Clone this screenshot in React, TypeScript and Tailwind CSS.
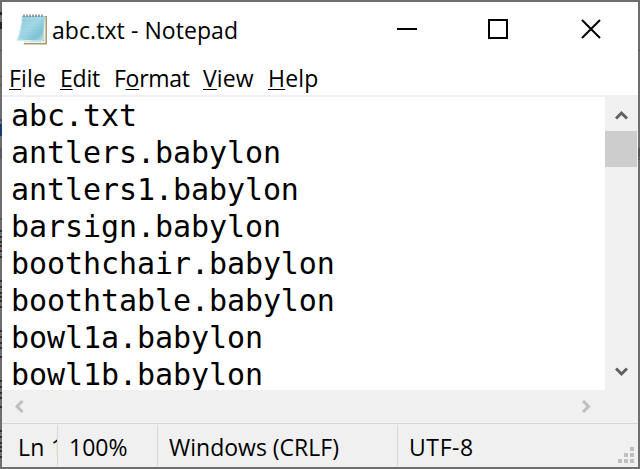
import React from 'react';

const files = ['abc.txt', 'antlers.babylon', 'antlers1.babylon', 'barsign.babylon', 'boothchair.babylon', 'boothtable.babylon', 'bowl1a.babylon', 'bowl1b.babylon'];

const edgeMarks: [number, number, string][] = [
  [12, 3, '#242424'], [22, 7, '#242424'], [50, 1, '#505050'], [76, 1, '#555'], [84, 2, '#665a52'],
  [119, 2, '#35517c'], [124, 12, '#163c78'], [148, 11, '#5c5c5c'], [218, 2, '#555'],
  [230, 2, '#303030'], [236, 2, '#303030'], [241, 2, '#303030'], [245, 2, '#303030'], [250, 2, '#303030'], [256, 2, '#303030'],
  [280, 2, '#303030'], [286, 2, '#303030'], [292, 2, '#303030'], [296, 2, '#303030'], [300, 2, '#303030'], [306, 2, '#303030'],
  [330, 2, '#303030'], [336, 2, '#303030'], [342, 2, '#303030'], [347, 2, '#303030'], [356, 2, '#303030'],
  [380, 2, '#303030'], [386, 2, '#303030'], [392, 2, '#303030'], [397, 2, '#303030'], [406, 2, '#303030'],
  [430, 2, '#303030'], [436, 2, '#303030'], [442, 2, '#303030'], [446, 2, '#303030'], [450, 2, '#303030'], [456, 2, '#303030'],
];

function NotepadIcon() {
  return (
    <svg className="h-8 w-8 shrink-0" viewBox="0 0 32 32">
      <defs>
        <linearGradient id="page" x1="0" y1="0" x2="1" y2="1">
          <stop offset="0" stopColor="#8fc9da" />
          <stop offset=".45" stopColor="#a6dae8" />
          <stop offset=".75" stopColor="#7fc4d5" />
          <stop offset="1" stopColor="#b9e5ee" />
        </linearGradient>
      </defs>
      <path d="M28 3h3v28.500H7.500l1-3 19-1z" fill="#a99b70" />
      <path d="M28 4h1.500v26H8v-2h20z" fill="#f0eee0" />
      <path d="M6 3h23l-2.500 24.500q-.2 1.300-1.700 1.300L.7 27.500Q5 18 6 3z" fill="url(#page)" />
      <path d="M6 4Q5 18 1 27l25 1.200" fill="none" stroke="#d5f1f7" strokeWidth="1" />
      <path d="M7 8h20M7 11h20M6 14h20M6 17h20M5 20h19M4 23h20" stroke="#74b4c7" strokeWidth=".6" opacity=".4" />
      <path d="M8 1.500v2.500M11 1.500v2.500M14 1.500v2.500M17 1.500v2.500M20 1.500v2.500M23 1.500v2.500M26 1.500v2.500" stroke="#777f83" strokeWidth="1.500" />
    </svg>
  );
}

function Chevron({ d, color, className }: { d: string; color: string; className: string }) {
  return (
    <svg className={`block shrink-0 ${className}`} fill="none" stroke={color} strokeWidth="3">
      <path d={d} />
    </svg>
  );
}

function MenuItem({ before = '', hot, after, className }: { before?: string; hot: string; after: string; className: string }) {
  return (
    <span className={`shrink-0 whitespace-nowrap ${className}`}>
      {before}<u className="decoration-1 underline-offset-2">{hot}</u>{after}
    </span>
  );
}

export default function App() {
  return (
    <div className="flex h-[469px] w-[640px] overflow-hidden bg-[#6e6e6e] pt-[2px] pb-[2px] font-['Open_Sans',sans-serif] text-[23px] text-black">
      <svg className="-mt-[2px] h-[469px] w-[2px] shrink-0" shapeRendering="crispEdges">
        {edgeMarks.map(([y, h, c]) => <rect key={y} x="0" y={y} width="2" height={h} fill={c} />)}
      </svg>
      <main className="flex h-[465px] w-[636px] shrink-0 flex-col bg-white">
        <header className="flex h-[57px] shrink-0 pl-[14px] pt-[11px]">
          <NotepadIcon />
          <h1 className="ml-[4px] w-[345px] whitespace-nowrap leading-[34px] tracking-[0.07px]">abc.txt - Notepad</h1>
          <svg className="h-8 w-[210px]" fill="none" stroke="black" strokeWidth="2">
            <path d="M0 16h20M92 7h18v18H92z" />
            <path d="M185 7l18 18M203 7l-18 18" />
          </svg>
        </header>
        <nav className="flex h-[36px] shrink-0 pl-[7px] leading-[38px]">
          <MenuItem hot="F" after="ile" className="w-[51px] tracking-[0.2px]" />
          <MenuItem hot="E" after="dit" className="w-[54px] tracking-[-0.2px]" />
          <MenuItem before="F" hot="o" after="rmat" className="w-[89px] tracking-[-0.3px]" />
          <MenuItem hot="V" after="iew" className="w-[65px] tracking-[0.1px]" />
          <MenuItem hot="H" after="elp" className="w-[55px] tracking-[0.2px]" />
        </nav>
        <div className="h-[2px] shrink-0 bg-[#f0f0f0]" />
        <div className="flex h-[293px] shrink-0">
          <div className="w-[603px] shrink-0 overflow-hidden pl-[9px] font-['DejaVu_Sans_Mono',monospace] text-[30px] leading-[37px] tracking-[-0.07px]">
            {files.map((f) => <div key={f} className="h-[37px] whitespace-nowrap">{f}</div>)}
          </div>
          <div className="flex w-[33px] shrink-0 flex-col bg-[#f0f0f0]">
            <div className="flex h-[34px] items-center justify-center pt-[2px]"><Chevron d="M1 8.500L6.500 3L12 8.500" color="#606060" className="h-[10px] w-[13px]" /></div>
            <div className="h-[36px] w-[32px] bg-[#cdcdcd]" />
            <div className="grow" />
            <div className="flex h-[34px] items-center justify-center pb-[2px]"><Chevron d="M1 1.500L6.500 7L12 1.500" color="#606060" className="h-[10px] w-[13px]" /></div>
          </div>
        </div>
        <div className="flex h-[33px] shrink-0 items-center justify-between bg-[#f0f0f0] pl-[12px] pr-[47px]">
          <Chevron d="M8.500 1L3 6.500L8.500 12" color="#bfbfbf" className="h-[13px] w-[10px]" />
          <Chevron d="M2 1L7.500 6.500L2 12" color="#bfbfbf" className="h-[13px] w-[10px]" />
        </div>
        <footer className="flex h-[44px] shrink-0 border-t border-[#d7d7d7] bg-[#f0f0f0] pt-px leading-[45px]">
          <div className="h-[41px] w-[56px] shrink-0 overflow-hidden whitespace-nowrap border-r border-[#d7d7d7] pl-[16px] tracking-[0.3px]">Ln 1</div>
          <div className="h-[41px] w-[100px] shrink-0 border-r border-[#d7d7d7] pl-[11px]">100%</div>
          <div className="h-[41px] w-[240px] shrink-0 whitespace-nowrap border-r border-[#d7d7d7] pl-[11px]">Windows (CRLF)</div>
          <div className="h-[41px] w-[220px] shrink-0 pl-[11px] tracking-[0.6px]">UTF-8</div>
          <svg className="mt-[22px] h-4 w-4 shrink-0" fill="#bfbfbf">
            <path d="M12 0h4v4h-4zM6 6h4v4H6zM12 6h4v4h-4zM0 12h4v4H0zM6 12h4v4H6zM12 12h4v4h-4z" />
          </svg>
        </footer>
      </main>
      <svg className="-mt-[2px] h-[469px] w-[2px] shrink-0" shapeRendering="crispEdges" fill="#555">
        <path d="M0 50h2v1H0zM0 148h2v9H0zM0 158h2v2H0z" />
      </svg>
    </div>
  );
}
